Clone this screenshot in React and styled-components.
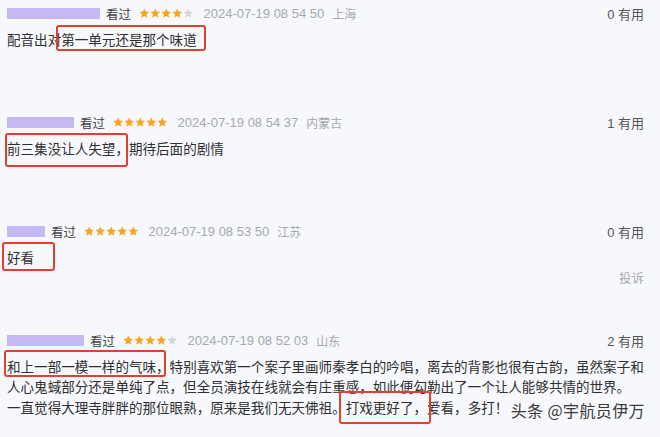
import React from "react";
import styled, { createGlobalStyle } from "styled-components";

const Global = createGlobalStyle`
  html, body { margin: 0; padding: 0; background: #f6f8fc; }
  body { font-family: "Liberation Sans", "Noto Sans CJK SC", sans-serif; }
`;

const Page = styled.div`
  position: relative;
  width: 660px;
  height: 437px;
  overflow: hidden;
  box-sizing: border-box;
  padding: 3px 16px 0 7px;
  background: #f6f8fc;
  color: #333;
`;

const Comment = styled.section`
  min-height: ${(p) => p.$h || 109}px;
`;

const Header = styled.div`
  display: flex;
  align-items: center;
  height: 20px;
  font-size: 13px;
  white-space: nowrap;
`;

const NameBar = styled.span`
  display: inline-block;
  width: ${(p) => p.$w}px;
  height: 11px;
  background: #c7b9f3;
  margin-right: 6px;
`;

const Seen = styled.span`
  color: #444;
  font-family: "Noto Sans CJK SC", sans-serif;
  font-size: 12.5px;
  margin-right: 8px;
`;

const Stars = styled.span`
  display: inline-flex;
  gap: 0.5px;
  margin-right: 10px;
`;

const Meta = styled.span`
  color: #a6a8ad;
  font-size: 13px;
`;

const Region = styled.span`
  color: #a6a8ad;
  font-family: "Noto Sans CJK SC", sans-serif;
  font-size: 12px;
  margin-left: 8px;
`;

const Useful = styled.span`
  margin-left: auto;
  color: #555;
  font-size: 13px;
  font-family: "Liberation Sans", "Noto Sans CJK SC", sans-serif;
`;

const Body = styled.div`
  margin-top: 6px;
  font-family: "Noto Sans CJK SC", sans-serif;
  font-size: 13.55px;
  line-height: 20.3px;
  color: #2f2f2f;
`;

const Line = styled.div`
  white-space: nowrap;
`;

const Mark = styled.span`
  position: relative;
  &::after {
    content: "";
    position: absolute;
    top: ${(p) => p.$t}px;
    bottom: ${(p) => p.$b}px;
    left: ${(p) => p.$l}px;
    right: ${(p) => p.$r}px;
    border: 2px solid #e2402f;
    border-radius: 3px;
    pointer-events: none;
  }
`;

const Report = styled.div`
  margin-top: 1px;
  text-align: right;
  font-family: "Noto Sans CJK SC", sans-serif;
  font-size: 12.5px;
  line-height: 20px;
  color: #a8aaae;
`;

const Watermark = styled.div`
  position: absolute;
  right: 15px;
  bottom: 15px;
  font-family: "Noto Sans CJK SC", sans-serif;
  font-size: 16px;
  color: #3a3a3a;
  letter-spacing: 0.4px;
`;

const Star = ({ on }) => (
  <svg width="10.5" height="10.5" viewBox="0 0 24 24">
    <path
      d="M12 1l3.2 7.2 7.8.8-5.9 5.2 1.8 7.8L12 18 5.1 22l1.8-7.8L1 9l7.8-.8z"
      fill={on ? "#f7a51e" : "#d8d8d8"}
    />
  </svg>
);

const Rating = ({ n }) => (
  <Stars>
    {[0, 1, 2, 3, 4].map((i) => (
      <Star key={i} on={i < n} />
    ))}
  </Stars>
);

const Head = ({ w, n, date, region, useful }) => (
  <Header>
    <NameBar $w={w} />
    <Seen>看过</Seen>
    <Rating n={n} />
    <Meta>{date}</Meta>
    <Region>{region}</Region>
    <Useful>{useful} 有用</Useful>
  </Header>
);

export default function App() {
  return (
    <>
      <Global />
      <Page>
        <Comment>
          <Head w={93} n={4} date="2024-07-19 08 54 50" region="上海" useful={0} />
          <Body>
            <Line>
              配音出对
              <Mark $t={-4} $b={-2} $l={-5} $r={-9}>第一单元还是那个味道</Mark>
            </Line>
          </Body>
        </Comment>

        <Comment>
          <Head w={67} n={5} date="2024-07-19 08 54 37" region="内蒙古" useful={1} />
          <Body>
            <Line>
              <Mark $t={-5} $b={-9} $l={-2} $r={1}>前三集没让人失望，</Mark>
              期待后面的剧情
            </Line>
          </Body>
        </Comment>

        <Comment>
          <Head w={38} n={5} date="2024-07-19 08 53 50" region="江苏" useful={0} />
          <Body>
            <Line>
              <Mark $t={-5} $b={-4} $l={-5} $r={-21}>好看</Mark>
            </Line>
          </Body>
          <Report>投诉</Report>
        </Comment>

        <Comment>
          <Head w={77} n={4} date="2024-07-19 08 52 03" region="山东" useful={2} />
          <Body>
            <Line>
              <Mark $t={-6} $b={-1} $l={-3} $r={4}>和上一部一模一样的气味，</Mark>
              特别喜欢第一个案子里画师秦孝白的吟唱，离去的背影也很有古韵，虽然案子和
            </Line>
            <Line>
              人心鬼蜮部分还是单纯了点，但全员演技在线就会有庄重感，如此便勾勒出了一个让人能够共情的世界。
            </Line>
            <Line>
              一直觉得大理寺胖胖的那位眼熟，原来是我们无天佛祖。
              <Mark $t={-6} $b={-7} $l={-7} $r={-4}>打戏更好了，</Mark>
              爱看，多打！
            </Line>
          </Body>
        </Comment>

        <Watermark>头条 @宇航员伊万</Watermark>
      </Page>
    </>
  );
}
